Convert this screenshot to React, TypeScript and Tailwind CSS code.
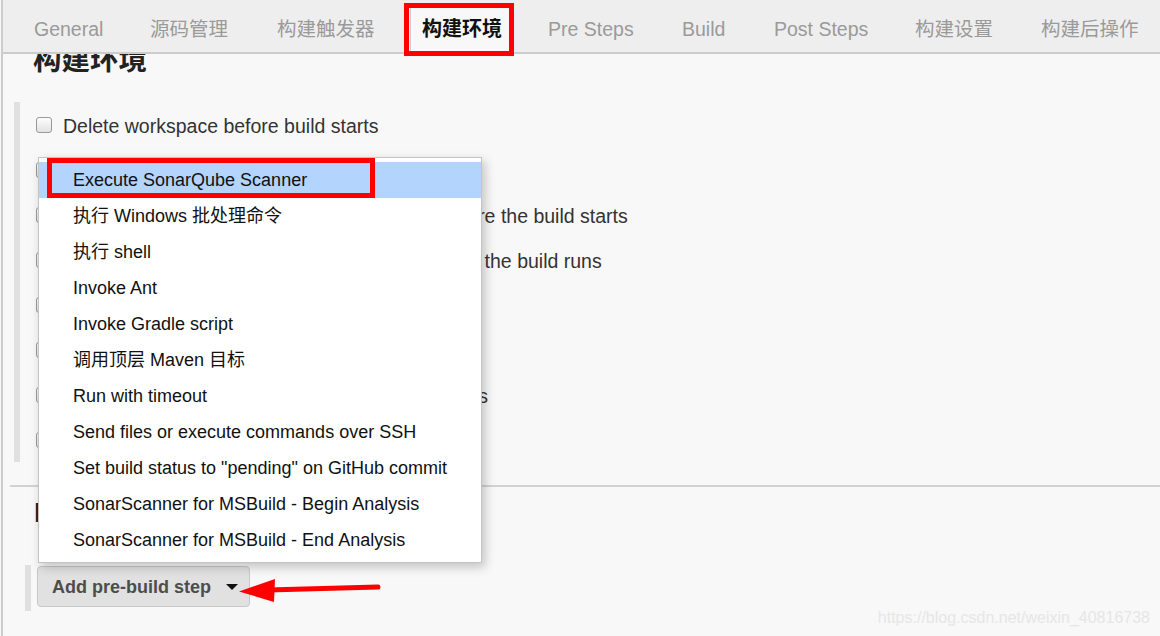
import React from "react";

const tabs: { label: string; w: string; active?: boolean }[] = [
  { label: "General", w: "w-[69px]" },
  { label: "源码管理", w: "w-[80px]" },
  { label: "构建触发器", w: "w-[98px]" },
  { label: "构建环境", w: "w-[80px]", active: true },
  { label: "Pre Steps", w: "w-[87px]" },
  { label: "Build", w: "w-[45px]" },
  { label: "Post Steps", w: "w-[94px]" },
  { label: "构建设置", w: "w-[79px]" },
  { label: "构建后操作", w: "w-[98px]" },
];

const envOptions = [
  "Delete workspace before build starts",
  "Use secret text(s) or file(s)",
  "Send files or execute commands over SSH before the build starts",
  "Send files or execute commands over SSH after the build runs",
  "Add timestamps to the Console Output",
  "Abort the build if it's stuck",
  "Inspect build log for published Gradle build scans",
  "With Ant",
];

const menuItems = [
  "Execute SonarQube Scanner",
  "执行 Windows 批处理命令",
  "执行 shell",
  "Invoke Ant",
  "Invoke Gradle script",
  "调用顶层 Maven 目标",
  "Run with timeout",
  "Send files or execute commands over SSH",
  'Set build status to "pending" on GitHub commit',
  "SonarScanner for MSBuild - Begin Analysis",
  "SonarScanner for MSBuild - End Analysis",
];

function Checkbox() {
  return (
    <span className="block w-[16px] h-[16px] shrink-0 rounded-[3px] border border-[#9a9a9a] bg-gradient-to-b from-[#fdfdfd] to-[#e2e2e2]" />
  );
}

export default function App() {
  return (
    <div className="relative w-[1160px] h-[636px] overflow-hidden bg-[#f8f8f8] font-['Liberation_Sans','Noto_Sans_CJK_SC',sans-serif]">
      <div className="ml-px h-full border-l-2 border-[#cccccc]">
        {/* Tab bar */}
        <div className="flex items-end h-[54px] bg-[#eeeeee] border-b-2 border-[#cccccc] pl-[19px] gap-[23px]">
          {tabs.map((t) =>
            t.active ? (
              <div
                key={t.label}
                className="flex items-center h-[46px] -mb-[2px] pb-[4px] pl-[11px] pr-[10px] bg-[#f8f8f8] border-x border-[#cccccc]"
              >
                <span className={`${t.w} whitespace-nowrap text-[20px] leading-[24px] font-bold text-[#111]`}>
                  {t.label}
                </span>
              </div>
            ) : (
              <div key={t.label} className="flex items-center h-[44px] pb-[2px] px-3">
                <span className={`${t.w} whitespace-nowrap text-[19.5px] leading-[24px] text-[#9a9a9a]`}>
                  {t.label}
                </span>
              </div>
            )
          )}
        </div>

        {/* Section heading, scrolled under the tab bar */}
        <div className="h-[26px] overflow-hidden">
          <h2 className="-mt-[8px] ml-[30px] text-[28.5px] leading-[28px] font-bold text-[#222]">构建环境</h2>
        </div>

        {/* Build environment options */}
        <div className="mt-[22px] ml-[11px] border-l-[6px] border-[#e0e0e0]">
          {envOptions.map((o) => (
            <div key={o} className="flex items-center h-[45px] pl-[16px] gap-[11px]">
              <Checkbox />
              <span className="text-[19.5px] leading-[24px] pt-[3px] text-[#333] whitespace-nowrap">{o}</span>
            </div>
          ))}
        </div>

        <div className="mt-[23px] ml-[7px] h-[2px] bg-[#d2d2d2]" />

        <h2 className="mt-[10px] ml-[31px] text-[28px] leading-[32px] font-bold text-[#222]">Pre Steps</h2>

        <div className="mt-[36px] ml-[22px] h-[46px] border-l-[6px] border-[#e0e0e0] pl-[6px] pt-[1px]">
          <button className="flex items-center h-[41px] pl-[14px] pr-[11px] rounded-[4px] border border-[#c8c8c8] bg-[#e1e1e1]">
            <span className="text-[18px] leading-[22px] font-bold text-[#4d4d4d]">Add pre-build step</span>
            <span className="ml-[15px] w-0 h-0 border-l-[6px] border-r-[6px] border-t-[6px] border-l-transparent border-r-transparent border-t-[#111]" />
          </button>
        </div>
      </div>

      {/* Dropdown menu */}
      <div className="absolute left-[38px] top-[157px] w-[444px] bg-white border border-[#c4c4c4] pt-[4px] pb-[4px] shadow-[3px_4px_10px_rgba(0,0,0,0.22)]">
        {menuItems.map((m, i) => (
          <div
            key={m}
            className={`flex items-center h-[36px] pl-[34px] text-[18px] leading-[22px] text-[#111] whitespace-nowrap ${
              i === 0 ? "bg-[#b3d4fc]" : ""
            }`}
          >
            {m}
          </div>
        ))}
      </div>

      {/* Annotations */}
      <div className="absolute left-[404px] top-[3px] w-[110px] h-[53px] border-[5px] border-[#ff0000]" />
      <div className="absolute left-[47px] top-[158px] w-[328px] h-[40px] border-[5px] border-[#ff0000]" />
      <svg className="absolute left-[230px] top-[570px]" width="160" height="40" viewBox="230 570 160 40">
        <line x1="378" y1="587" x2="268" y2="590" stroke="#ff0000" strokeWidth="5" strokeLinecap="round" />
        <polygon points="239,591.5 275,579 274,602" fill="#ff0000" />
      </svg>

      {/* Watermark */}
      <div className="absolute right-[10px] bottom-[9px] text-[16px] leading-[18px] text-[#e6e6e6]">
        https://blog.csdn.net/weixin_40816738
      </div>
    </div>
  );
}
